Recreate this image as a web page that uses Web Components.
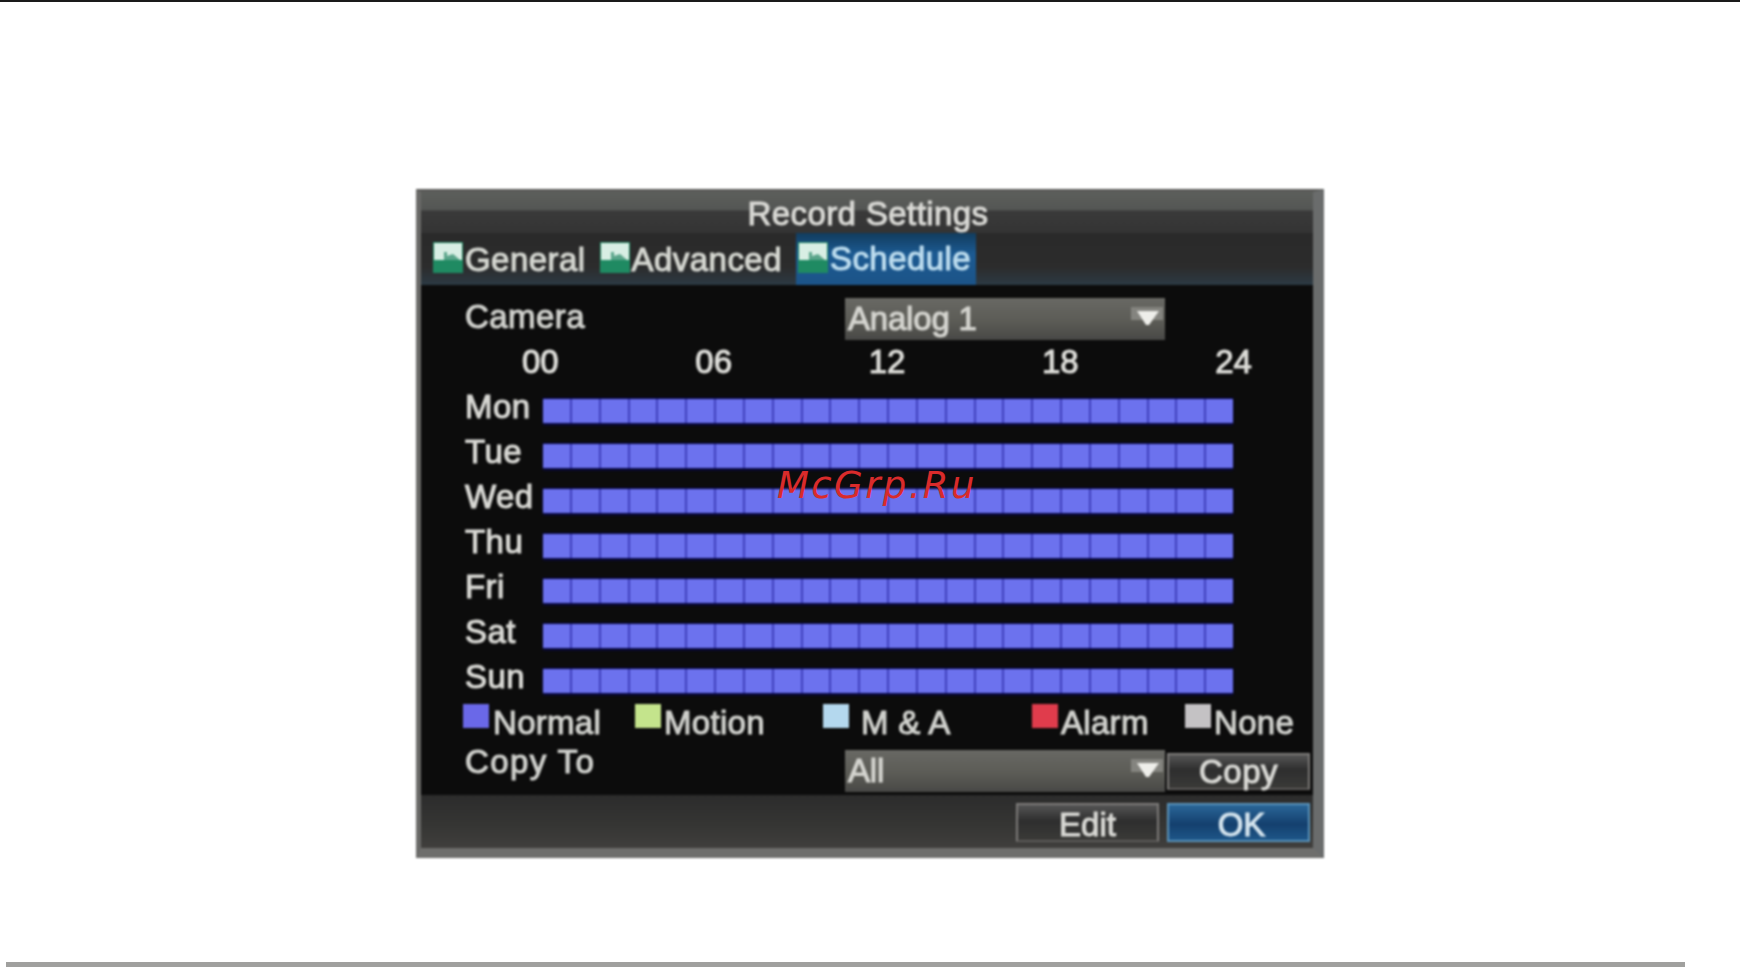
<!DOCTYPE html>
<html>
<head>
<meta charset="utf-8">
<title>Record Settings</title>
<style>
  html, body { margin: 0; padding: 0; background: #fff; }
  body { width: 1740px; height: 968px; overflow: hidden; font-family: "Liberation Sans", Arial, sans-serif; }
  .top-line { height: 2px; background: #1a1a1a; }
  .bottom-rule { height: 5px; width: 1679px; margin: 104px 0 0 6px; background: #a0a09e; }
</style>
</head>
<body>
<div class="top-line"></div>
<record-dialog heading="Record Settings">
  <osd-tab slot="tabs">General</osd-tab>
  <osd-tab slot="tabs">Advanced</osd-tab>
  <osd-tab slot="tabs" active>Schedule</osd-tab>

  <div slot="camera-label">Camera</div>
  <osd-select slot="camera-select">Analog 1</osd-select>

  <schedule-row slot="rows" day="Mon"></schedule-row>
  <schedule-row slot="rows" day="Tue"></schedule-row>
  <schedule-row slot="rows" day="Wed"></schedule-row>
  <schedule-row slot="rows" day="Thu"></schedule-row>
  <schedule-row slot="rows" day="Fri"></schedule-row>
  <schedule-row slot="rows" day="Sat"></schedule-row>
  <schedule-row slot="rows" day="Sun"></schedule-row>

  <legend-item slot="legend" color="#6a68e8" gap="4" style="width:172px">Normal</legend-item>
  <legend-item slot="legend" color="#c4e48c" style="width:188px">Motion</legend-item>
  <legend-item slot="legend" color="#b4d8ee" gap="12" style="width:209px">M &amp; A</legend-item>
  <legend-item slot="legend" color="#e03c4c" style="width:153px">Alarm</legend-item>
  <legend-item slot="legend" color="#c4c2c4">None</legend-item>

  <osd-select slot="copy-select">All</osd-select>
  <osd-button slot="copy-button">Copy</osd-button>

  <osd-button slot="footer">Edit</osd-button>
  <osd-button slot="footer" primary>OK</osd-button>
</record-dialog>
<div class="bottom-rule"></div>

<script>
class OsdTab extends HTMLElement {
  constructor() {
    super();
    this.attachShadow({ mode: "open" }).innerHTML = `
    <style>
      :host {
        display: flex;
        height: 52px;
        align-items: flex-start;
        padding-right: 14px;
        color: #d4d6d0;
        letter-spacing: 0.45px;
      }
      :host([active]) {
        background: linear-gradient(#123c5e, #1c5a92 40%, #1c5488);
        color: #bcdcee;
        padding: 0 5px 0 2px;
      }
      svg { width: 30px; height: 31px; margin-top: 9px; flex: none; }
      span { line-height: 41px; margin: 6px 0 0 2px; }
      :host([active]) span { margin-top: 5px; }
    </style>
    <svg viewBox="0 0 30 31">
      <rect width="30" height="31" fill="#1f8a62"/>
      <rect x="1" y="1" width="28" height="17" fill="#d8eee4"/>
      <path d="M11 18 V10 H14 V14 L20 12 L27 18 Z" fill="#5aa58a"/>
    </svg>
    <span><slot></slot></span>`;
  }
}
customElements.define("osd-tab", OsdTab);

class OsdSelect extends HTMLElement {
  constructor() {
    super();
    this.attachShadow({ mode: "open" }).innerHTML = `
    <style>
      :host {
        display: flex;
        width: 320px;
        height: 42px;
        box-sizing: border-box;
        padding-left: 3px;
        justify-content: space-between;
        background: linear-gradient(#686864, #5c5c56 55%, #484846);
        color: #d4d4cf;
        line-height: 42px;
        letter-spacing: -0.2px;
      }
      svg { width: 36px; height: 42px; flex: none; }
    </style>
    <span><slot></slot></span>
    <svg viewBox="0 0 36 42">
      <path d="M2 9 H34 V22 H2 Z" fill="#84847f"/>
      <path d="M8 13 H30 L20 27 H17 Z" fill="#eeeeea"/>
    </svg>`;
  }
}
customElements.define("osd-select", OsdSelect);

class OsdButton extends HTMLElement {
  constructor() {
    super();
    this.attachShadow({ mode: "open" }).innerHTML = `
    <style>
      :host {
        display: block;
        width: 143px;
        height: 39px;
        box-sizing: border-box;
        border: 2px solid #7c7a78;
        border-bottom-color: #5c5a58;
        background: linear-gradient(#555, #2e2e2e 45%, #3a3a38);
        color: #d8d8d4;
        text-align: center;
        line-height: 39px;
      }
      :host([primary]) {
        padding-left: 6px;
        border-color: #5a92b8;
        background: linear-gradient(#2a6698, #14406e 55%, #1e5688);
        color: #d4e4ee;
      }
    </style>
    <slot></slot>`;
  }
}
customElements.define("osd-button", OsdButton);

class LegendItem extends HTMLElement {
  static get observedAttributes() { return ["color", "gap"]; }

  constructor() {
    super();
    this.attachShadow({ mode: "open" }).innerHTML = `
    <style>
      :host {
        display: flex;
        align-items: flex-start;
        color: #cfd0cc;
        letter-spacing: 0.3px;
      }
      i { display: block; width: 26px; height: 24px; margin-top: 1px; flex: none; }
      span { line-height: 39px; margin: 0 0 0 3px; }
    </style>
    <i></i><span><slot></slot></span>`;
  }

  attributeChangedCallback(name, old, value) {
    if (name === "color") this.shadowRoot.querySelector("i").style.background = value;
    if (name === "gap") this.shadowRoot.querySelector("span").style.marginLeft = value + "px";
  }
}
customElements.define("legend-item", LegendItem);

class ScheduleRow extends HTMLElement {
  constructor() {
    super();
    this.attachShadow({ mode: "open" }).innerHTML = `
    <style>
      :host {
        display: flex;
        height: 45px;
        align-items: center;
        color: #d8d8d4;
        letter-spacing: 0.45px;
      }
      .day { width: 78px; align-self: flex-start; line-height: 37px; }
      .cells {
        width: 690px;
        height: 24px;
        display: grid;
        grid-template-columns: repeat(24, 1fr);
        gap: 2px;
        background: #4040bc;
        box-shadow: 0 2px 2px #0a0a50, 0 -1px 1px #0a0a50;
      }
      .cells i { background: #6c72ee; }
    </style>
    <div class="day"></div>
    <div class="cells"></div>`;
  }

  connectedCallback() {
    this.shadowRoot.querySelector(".day").textContent = this.getAttribute("day");
    const cells = this.shadowRoot.querySelector(".cells");
    for (let i = 0; i < 24; i++) {
      cells.appendChild(document.createElement("i"));
    }
  }
}
customElements.define("schedule-row", ScheduleRow);

class RecordDialog extends HTMLElement {
  constructor() {
    super();
    this.attachShadow({ mode: "open" }).innerHTML = `
    <style>
      :host {
        display: block;
        position: relative;
        width: 908px;
        height: 669px;
        margin: 187px 0 0 416px;
      }
      .frame {
        box-sizing: border-box;
        height: 100%;
        display: flex;
        flex-direction: column;
        border-style: solid;
        border-width: 3px 11px 10px 5px;
        border-color: #5a5a58 #6a6c6c #6e6e6c #6a6a68;
        background: #0c0c0c;
        font-size: 33px;
        filter: blur(1.1px);
        -webkit-text-stroke: 1.1px currentColor;
      }
      .title {
        height: 41px;
        flex: none;
        padding-left: 2px;
        line-height: 43px;
        text-align: center;
        letter-spacing: 0.4px;
        color: #d8d8d4;
        background: linear-gradient(#5c5f5b, #545654 44%, #3a3a3a 46%, #343434);
      }
      .tabs {
        height: 52px;
        flex: none;
        display: flex;
        padding-left: 12px;
        background: linear-gradient(#2a2a2a, #2c2c2c 65%, #2c3a44);
      }
      .main { flex: 1; padding-left: 44px; color: #cfd0cc; letter-spacing: 0.45px; }
      .line { display: flex; justify-content: space-between; align-items: flex-start; }
      .camera { margin-top: 13px; height: 42px; width: 700px; }
      .camera .label { line-height: 38px; }
      .hours {
        height: 48px;
        width: 730px;
        margin-left: 57px;
        line-height: 43px;
        color: #dcdcd8;
        letter-spacing: 0;
      }
      .legend { display: flex; height: 47px; margin-left: -2px; }
      .copy { display: flex; height: 42px; }
      .copy .label { width: 380px; line-height: 23px; letter-spacing: 1.4px; }
      .copy ::slotted(osd-button) { margin: 3px 0 0 2px; height: 37px; line-height: 33px; }
      .footer {
        height: 53px;
        flex: none;
        display: flex;
        justify-content: flex-end;
        gap: 8px;
        box-sizing: border-box;
        padding: 8px 3px 0 0;
        background: linear-gradient(#2c2c2c, #363634 60%, #403f3d);
      }
      .mark {
        position: absolute;
        left: 361px;
        top: 275px;
        font: italic 37px "DejaVu Sans", sans-serif;
        letter-spacing: 2.4px;
        line-height: 44px;
        color: #d92b2b;
      }
    </style>
    <div class="frame">
      <div class="title"></div>
      <div class="tabs"><slot name="tabs"></slot></div>
      <div class="main">
        <div class="line camera">
          <div class="label"><slot name="camera-label"></slot></div>
          <div style="width:320px"><slot name="camera-select"></slot></div>
        </div>
        <div class="line hours"><span>00</span><span>06</span><span>12</span><span>18</span><span>24</span></div>
        <slot name="rows"></slot>
        <div class="legend"><slot name="legend"></slot></div>
        <div class="copy">
          <div class="label">Copy To</div>
          <slot name="copy-select"></slot>
          <slot name="copy-button"></slot>
        </div>
      </div>
      <div class="footer"><slot name="footer"></slot></div>
    </div>
    <div class="mark">McGrp.Ru</div>`;
  }

  connectedCallback() {
    this.shadowRoot.querySelector(".title").textContent = this.getAttribute("heading");
  }
}
customElements.define("record-dialog", RecordDialog);
</script>
</body>
</html>
